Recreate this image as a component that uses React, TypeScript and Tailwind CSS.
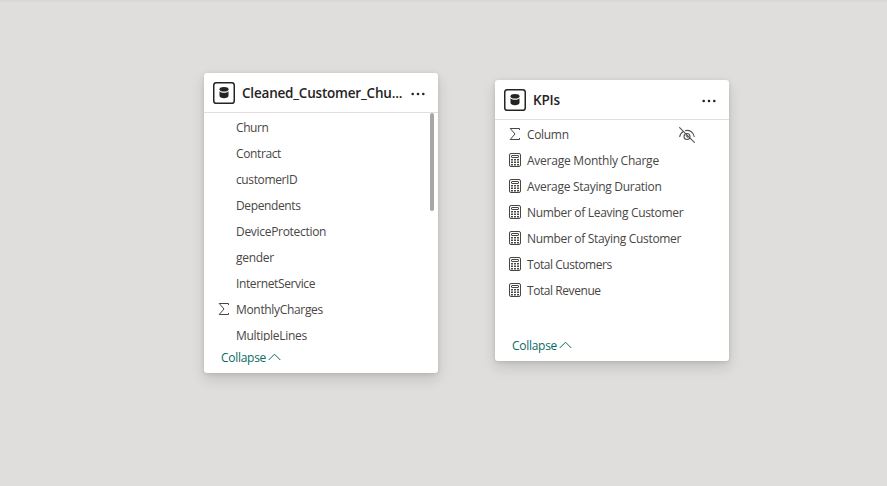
import React from "react";

type Kind = "none" | "sum" | "measure";
type Field = { name: string; kind: Kind; tracking: string; hidden?: boolean };

const churnFields: Field[] = [
  { name: "Churn", kind: "none", tracking: "tracking-[-0.4px]" },
  { name: "Contract", kind: "none", tracking: "tracking-[-0.38px]" },
  { name: "customerID", kind: "none", tracking: "tracking-[-0.38px]" },
  { name: "Dependents", kind: "none", tracking: "tracking-[-0.38px]" },
  { name: "DeviceProtection", kind: "none", tracking: "tracking-[-0.3px]" },
  { name: "gender", kind: "none", tracking: "tracking-[-0.28px]" },
  { name: "InternetService", kind: "none", tracking: "tracking-[-0.38px]" },
  { name: "MonthlyCharges", kind: "sum", tracking: "tracking-[-0.33px]" },
  { name: "MultipleLines", kind: "none", tracking: "tracking-[-0.3px]" },
];

const kpiFields: Field[] = [
  { name: "Column", kind: "sum", tracking: "tracking-[-0.33px]", hidden: true },
  { name: "Average Monthly Charge", kind: "measure", tracking: "tracking-[-0.24px]" },
  { name: "Average Staying Duration", kind: "measure", tracking: "tracking-[-0.28px]" },
  { name: "Number of Leaving Customer", kind: "measure", tracking: "tracking-[-0.32px]" },
  { name: "Number of Staying Customer", kind: "measure", tracking: "tracking-[-0.32px]" },
  { name: "Total Customers", kind: "measure", tracking: "tracking-[-0.45px]" },
  { name: "Total Revenue", kind: "measure", tracking: "tracking-[-0.43px]" },
];

function TableIcon() {
  return (
    <svg width="22" height="22" viewBox="0 0 22 22" className="shrink-0">
      <rect x="0.75" y="0.75" width="20.5" height="20.5" rx="2.6" fill="none" stroke="#252423" strokeWidth="1.5" />
      <ellipse cx="11" cy="7.2" rx="4.5" ry="2.3" fill="#252423" />
      <path
        d="M6.500 9.200C7.500 10.300 9.200 10.700 11 10.700S14.500 10.300 15.500 9.200V13.700C15.500 15.200 13.500 16.200 11 16.200S6.500 15.200 6.500 13.700Z"
        fill="#252423"
      />
    </svg>
  );
}

function SumIcon() {
  return (
    <svg width="12" height="14" viewBox="0 0 12 14" fill="none" stroke="#484644" strokeWidth="1">
      <path d="M10.500 3V1.500H1.200L6 7l-4.800 5.500h9.300V11" />
    </svg>
  );
}

function MeasureIcon() {
  return (
    <svg width="12" height="14" viewBox="0 0 12 14">
      <rect x="0.500" y="0.500" width="11" height="13" rx="1.500" fill="none" stroke="#484644" />
      <rect x="2.500" y="2.500" width="7" height="2" rx="0.500" fill="none" stroke="#484644" />
      {[6, 8.5, 11].map((y) =>
        [2, 5, 8].map((x) => <rect key={`${x}-${y}`} x={x} y={y} width="2" height="1.500" fill="#484644" />),
      )}
    </svg>
  );
}

function HiddenIcon() {
  return (
    <svg width="16" height="16" viewBox="0 0 16 16" fill="none" stroke="#55534f" strokeWidth="1.1">
      <path d="M0.300 0.300L15.700 15.700" />
      <path d="M0.600 10C1 7.500 2.300 5.500 4.300 4.400M6 3.700C10.500 2.500 14.500 5 15.400 10" />
      <circle cx="8" cy="9.500" r="3" />
      <path d="M6.800 8.300L9.200 10.700" />
    </svg>
  );
}

function FieldRow({ field }: { field: Field }) {
  return (
    <li className="flex h-[26px] items-center pr-[34px]">
      <span className="mb-[2px] ml-[14px] flex w-[18px] shrink-0">
        {field.kind === "sum" && <SumIcon />}
        {field.kind === "measure" && <MeasureIcon />}
      </span>
      <span className={`flex-1 whitespace-nowrap text-[12px] text-[#484644] ${field.tracking}`}>{field.name}</span>
      {field.hidden && <HiddenIcon />}
    </li>
  );
}

function TableCard(props: { title: string; titleTracking: string; fields: Field[]; place: string; scroll?: boolean }) {
  return (
    <section
      className={`absolute flex w-[234px] flex-col rounded-[3px] bg-white shadow-[0_6px_14px_rgba(0,0,0,0.13),0_1px_4px_rgba(0,0,0,0.11)] ${props.place}`}
    >
      <header className="flex h-10 shrink-0 items-center border-b border-[#e1dfdd] pl-[9px] pr-[13px]">
        <TableIcon />
        <h2 className={`ml-[7px] mt-[2px] flex-1 whitespace-nowrap text-[13.5px] font-semibold text-[#252423] ${props.titleTracking}`}>
          {props.title}
        </h2>
        <svg width="14" height="4" viewBox="0 0 14 4" fill="#252423" className="mt-[2px]">
          <circle cx="1.700" cy="2" r="1.300" />
          <circle cx="7" cy="2" r="1.300" />
          <circle cx="12.300" cy="2" r="1.300" />
        </svg>
      </header>
      <div className="flex min-h-0 flex-1 overflow-hidden">
        <ul className="flex-1 pt-[2px]">
          {props.fields.map((f) => (
            <FieldRow key={f.name} field={f} />
          ))}
        </ul>
        {props.scroll && <div className="mr-1 h-[98px] w-1 rounded-full bg-[#a6a6a6]" />}
      </div>
      <footer className="flex h-8 shrink-0 items-center gap-[2px] pl-[17px] pt-[2px] text-[12px] text-[#0b6a5f]">
        <span className="tracking-[-0.28px]">Collapse</span>
        <svg width="13" height="8" viewBox="0 0 13 8" fill="none" stroke="#0b6a5f" strokeWidth="1" className="mb-[2px]">
          <path d="M0.700 7L6.500 1.200L12.300 7" />
        </svg>
      </footer>
    </section>
  );
}

export default function App() {
  return (
    <main className="relative h-[486px] w-[887px] overflow-hidden border-t-2 border-[#d9d8d6] bg-[#dfdedc] font-['Open_Sans','Noto_Sans',sans-serif]">
      <TableCard
        title="Cleaned_Customer_Chu..."
        titleTracking="tracking-[-0.2px]"
        fields={churnFields}
        place="left-[204px] top-[71px] h-[300px]"
        scroll
      />
      <TableCard title="KPIs" titleTracking="tracking-[-0.2px]" fields={kpiFields} place="left-[495px] top-[78px] h-[281px]" />
    </main>
  );
}
